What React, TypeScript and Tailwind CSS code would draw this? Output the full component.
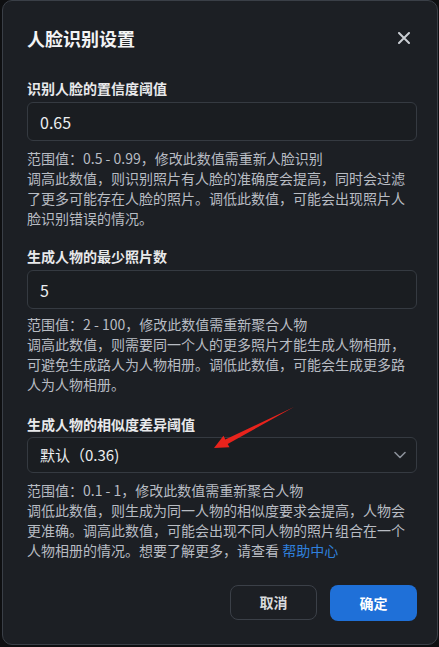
import { useState } from 'react'

const font = { fontFamily: '"Noto Sans CJK SC", "Noto Sans", sans-serif' }

function CloseIcon() {
  return (
    <svg width="12" height="12" viewBox="0 0 12 12" fill="none">
      <path d="M1 1L11 11M11 1L1 11" stroke="#c9cdd3" strokeWidth="2" strokeLinecap="round" />
    </svg>
  )
}

function Chevron() {
  return (
    <svg width="12" height="8" viewBox="0 0 12 8" fill="none">
      <path d="M1 1.5L6 6.5L11 1.5" stroke="#8a9099" strokeWidth="1.6" strokeLinecap="round" strokeLinejoin="round" />
    </svg>
  )
}

function App() {
  const [confidence, setConfidence] = useState('0.65')
  const [minPhotos, setMinPhotos] = useState('5')

  return (
    <div className="min-h-screen bg-[#0e0f11] relative" style={font}>
      {/* 弹窗 */}
      <div className="ml-[2px] w-[436px] h-[645px] bg-[#1c1f24] border border-[#3a3f47] rounded-[10px] pt-[23px] pl-6 pr-5 flex flex-col">
        <div className="flex items-center justify-between h-7">
          <h2 className="text-[18px] leading-7 font-bold text-[#f2f3f5]">人脸识别设置</h2>
          <button className="w-6 h-6 flex items-center justify-center mr-[1px]">
            <CloseIcon />
          </button>
        </div>

        {/* 置信度 */}
        <label className="mt-[26px] mb-1 text-[14px] leading-5 font-bold text-[#e8e9eb]">识别人脸的置信度阈值</label>
        <input
          value={confidence}
          onChange={(e) => setConfidence(e.target.value)}
          className="h-[39px] w-full rounded-md border border-[#353a41] bg-[#1a1d21] px-3 text-[16px] text-[#eceef0] outline-none"
        />
        <p className="mt-[7px] text-[14px] leading-5 text-[#b8bcc3]">
          范围值：0.5 - 0.99，修改此数值需重新人脸识别
          <br />
          调高此数值，则识别照片有人脸的准确度会提高，同时会过滤了更多可能存在人脸的照片。调低此数值，可能会出现照片人脸识别错误的情况。
        </p>

        {/* 最少照片数 */}
        <label className="mt-[18px] mb-1 text-[14px] leading-5 font-bold text-[#e8e9eb]">生成人物的最少照片数</label>
        <input
          value={minPhotos}
          onChange={(e) => setMinPhotos(e.target.value)}
          className="h-[39px] w-full rounded-md border border-[#353a41] bg-[#1a1d21] px-3 text-[16px] text-[#eceef0] outline-none"
        />
        <p className="mt-[5px] text-[14px] leading-5 text-[#b8bcc3]">
          范围值：2 - 100，修改此数值需重新聚合人物
          <br />
          调高此数值，则需要同一个人的更多照片才能生成人物相册，可避免生成路人为人物相册。调低此数值，可能会生成更多路人为人物相册。
        </p>

        {/* 相似度差异阈值 */}
        <label className="mt-[20px] mb-[3px] text-[14px] leading-5 font-bold text-[#e8e9eb]">生成人物的相似度差异阈值</label>
        <button className="h-[36px] w-full rounded-md border border-[#353a41] bg-[#1a1d21] pl-3 pr-[10px] flex items-center justify-between text-[15px] text-[#eceef0]">
          <span>默认（0.36)</span>
          <Chevron />
        </button>
        <p className="mt-[7px] text-[14px] leading-5 text-[#b8bcc3]">
          范围值：0.1 - 1，修改此数值需重新聚合人物
          <br />
          调低此数值，则生成为同一人物的相似度要求会提高，人物会更准确。调高此数值，可能会出现不同人物的照片组合在一个人物相册的情况。想要了解更多，请查看
          <span className="text-[#2f80dc]"> 帮助中心</span>
        </p>

        <div className="mt-[25px] flex justify-end gap-[13px]">
          <button className="w-[87px] h-[35px] rounded-lg border border-[#3b4048] text-[14px] font-bold text-[#d9dbde]">取消</button>
          <button className="w-[87px] h-[36px] rounded-lg bg-[#1f70d8] text-[14px] font-bold text-white">确定</button>
        </div>
      </div>

      {/* 红色标注箭头 */}
      <svg className="absolute left-0 top-0 pointer-events-none" width="439" height="647">
        <polygon
          points="214,448 223.5,435.8 225.3,439.5 294,407 227.7,443.9 229.5,447.3"
          fill="#e8231c"
        />
      </svg>
    </div>
  )
}

export default App
